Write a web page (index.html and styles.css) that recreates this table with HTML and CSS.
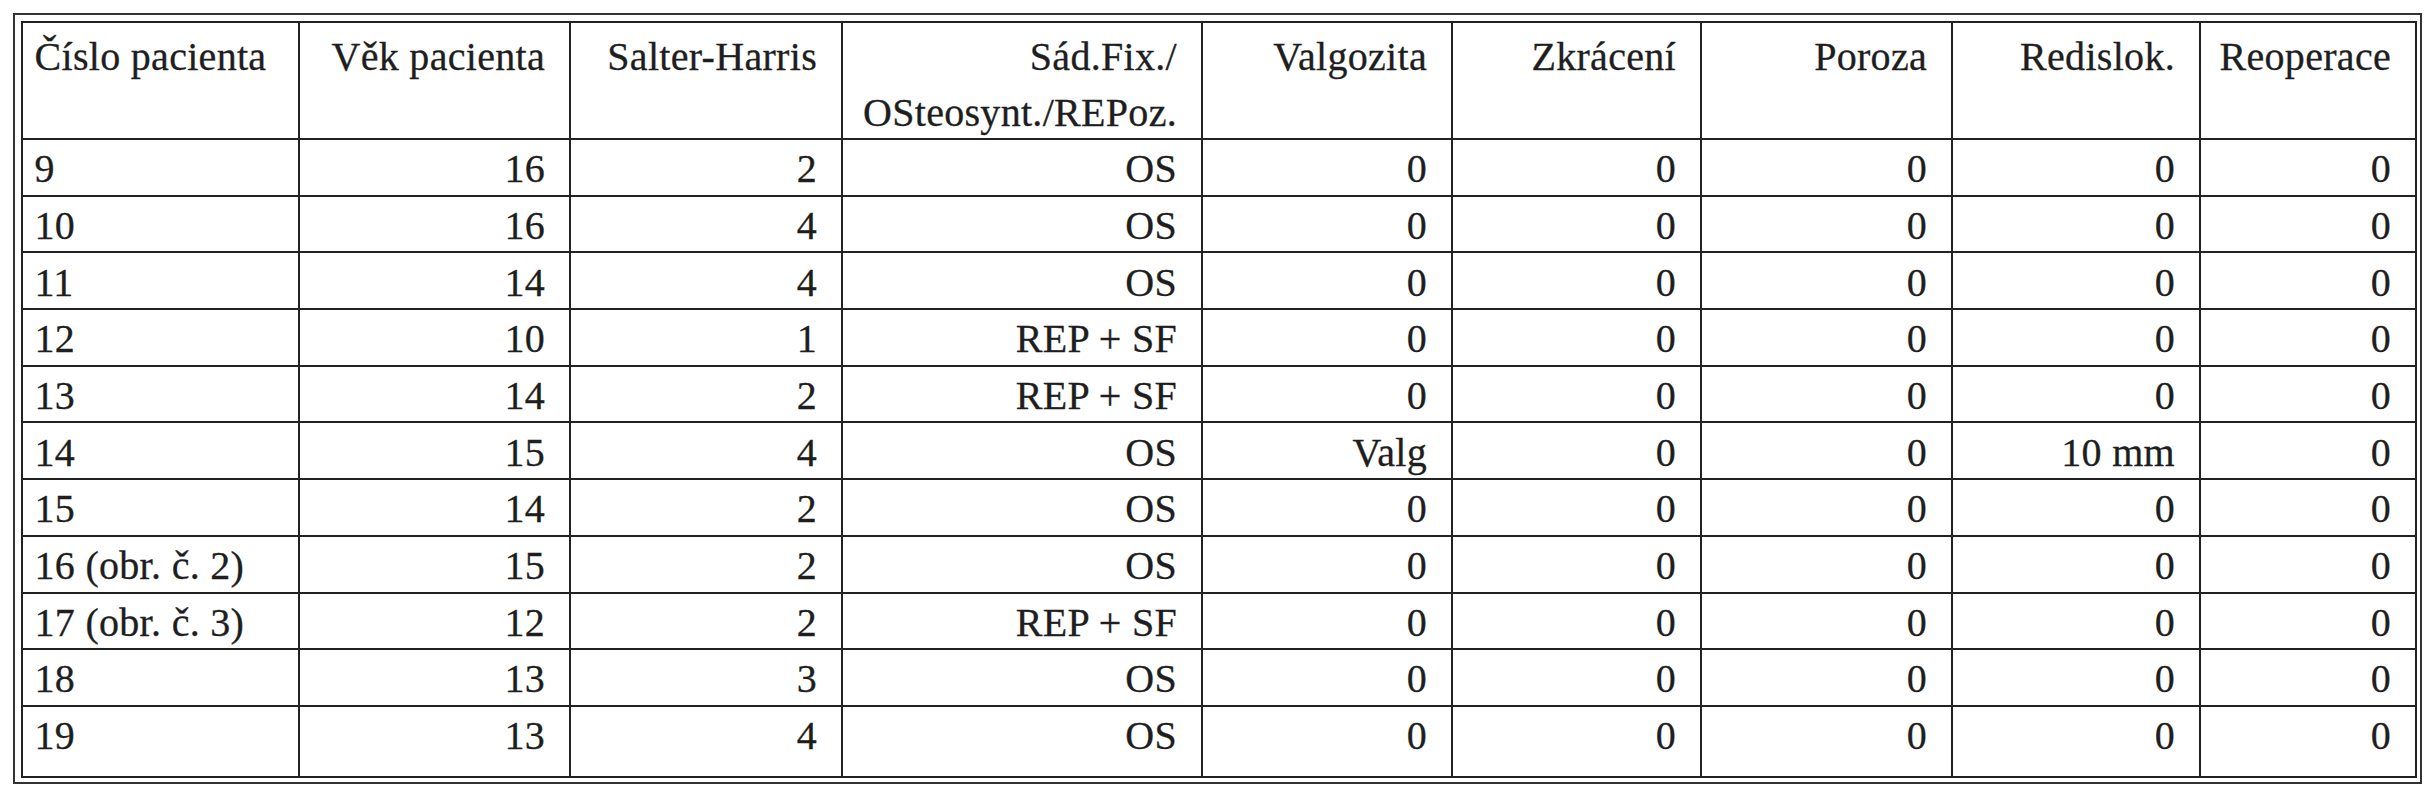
FILE: index.html
```html
<!DOCTYPE html>
<html lang="cs">
<head>
<meta charset="utf-8">
<title>Tabulka pacientů</title>
<link rel="stylesheet" href="styles.css">
</head>
<body>
<div class="frame">
<table class="data">
<colgroup>
<col class="c1"><col class="c2"><col class="c3"><col class="c4"><col class="c5"><col class="c6"><col class="c7"><col class="c8"><col class="c9">
</colgroup>
<thead>
<tr>
<th class="left"><div class="hd">Číslo pacienta</div></th>
<th><div class="hd">Věk pacienta</div></th>
<th><div class="hd">Salter-Harris</div></th>
<th><div class="hd">Sád.Fix./<br>OSteosynt./REPoz.</div></th>
<th><div class="hd">Valgozita</div></th>
<th><div class="hd">Zkrácení</div></th>
<th><div class="hd">Poroza</div></th>
<th><div class="hd">Redislok.</div></th>
<th><div class="hd">Reoperace</div></th>
</tr>
</thead>
<tbody>
<tr><td class="left">9</td><td>16</td><td>2</td><td>OS</td><td>0</td><td>0</td><td>0</td><td>0</td><td>0</td></tr>
<tr><td class="left">10</td><td>16</td><td>4</td><td>OS</td><td>0</td><td>0</td><td>0</td><td>0</td><td>0</td></tr>
<tr><td class="left">11</td><td>14</td><td>4</td><td>OS</td><td>0</td><td>0</td><td>0</td><td>0</td><td>0</td></tr>
<tr><td class="left">12</td><td>10</td><td>1</td><td>REP + SF</td><td>0</td><td>0</td><td>0</td><td>0</td><td>0</td></tr>
<tr><td class="left">13</td><td>14</td><td>2</td><td>REP + SF</td><td>0</td><td>0</td><td>0</td><td>0</td><td>0</td></tr>
<tr><td class="left">14</td><td>15</td><td>4</td><td>OS</td><td>Valg</td><td>0</td><td>0</td><td>10 mm</td><td>0</td></tr>
<tr><td class="left">15</td><td>14</td><td>2</td><td>OS</td><td>0</td><td>0</td><td>0</td><td>0</td><td>0</td></tr>
<tr><td class="left">16 (obr. č. 2)</td><td>15</td><td>2</td><td>OS</td><td>0</td><td>0</td><td>0</td><td>0</td><td>0</td></tr>
<tr><td class="left">17 (obr. č. 3)</td><td>12</td><td>2</td><td>REP + SF</td><td>0</td><td>0</td><td>0</td><td>0</td><td>0</td></tr>
<tr><td class="left">18</td><td>13</td><td>3</td><td>OS</td><td>0</td><td>0</td><td>0</td><td>0</td><td>0</td></tr>
<tr class="last"><td class="left">19</td><td>13</td><td>4</td><td>OS</td><td>0</td><td>0</td><td>0</td><td>0</td><td>0</td></tr>
</tbody>
</table>
</div>
</body>
</html>
```

FILE: styles.css
```css
html, body {
  margin: 0;
  padding: 0;
  background: #ffffff;
}

body {
  font-family: "Liberation Serif", "Times New Roman", Times, serif;
  color: #1e1e1e;
}

.frame {
  display: inline-block;
  margin: 13px 0 0 12.5px;
  border: 2px solid #333333;
  padding: 6px 3px 4px 6.5px;
}

.data {
  table-layout: fixed;
  width: 2396px;
  border-collapse: separate;
  border-spacing: 0;
  border-top: 2px solid #222222;
  border-left: 2px solid #222222;
  font-family: "Liberation Serif", "Times New Roman", Times, serif;
  font-size: 40px;
  letter-spacing: 0.3px;
  -webkit-text-stroke: 0.3px #1e1e1e;
}

.c1 { width: 276.5px; }
.c2 { width: 271.5px; }
.c3 { width: 272px; }
.c4 { width: 360px; }
.c5 { width: 250px; }
.c6 { width: 249px; }
.c7 { width: 251px; }
.c8 { width: 248px; }
.c9 { width: 216px; }

.data th,
.data td {
  border-right: 2px solid #222222;
  border-bottom: 2px solid #222222;
  text-align: right;
  white-space: nowrap;
  font-weight: normal;
  overflow: visible;
}

.data th {
  vertical-align: top;
  padding: 6px 24px 0 11.5px;
  line-height: 56px;
}

.hd {
  height: 109px;
}

.data td {
  vertical-align: top;
  padding: 6.2px 24px 2.5px 11.5px;
  line-height: 46px;
}

.data .left {
  text-align: left;
}

.data tr.last td {
  padding-bottom: 16.8px;
}
```
